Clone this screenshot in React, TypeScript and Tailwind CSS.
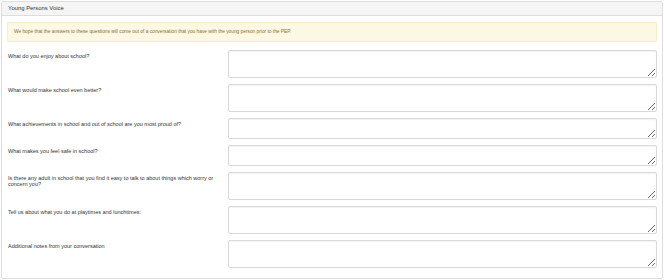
import React from 'react';

interface Question {
  label: string;
  tall: boolean;
}

const questions: Question[] = [
  { label: 'What do you enjoy about school?', tall: true },
  { label: 'What would make school even better?', tall: true },
  { label: 'What achievements in school and out of school are you most proud of?', tall: false },
  { label: 'What makes you feel safe in school?', tall: false },
  {
    label: 'Is there any adult in school that you find it easy to talk to about things which worry or concern you?',
    tall: true,
  },
  { label: 'Tell us about what you do at playtimes and lunchtimes:', tall: true },
  { label: 'Additional notes from your conversation', tall: true },
];

const App: React.FC = () => {
  return (
    <div className="w-[664px] h-[280px] bg-white p-[1px] font-['Liberation_Sans',Arial,sans-serif] text-[#333]">
      <div className="border border-[#ddd] rounded-[2px] bg-white">
        {/* Panel heading */}
        <div className="h-[14px] bg-[#f5f5f5] border-b border-[#ddd] px-[6px] flex items-center text-[5.9px] leading-none">
          Young Persons Voice
        </div>

        <div className="px-[5px] pt-[6px] pb-[10px]">
          <div className="h-[20px] bg-[#fcf8e3] border border-[#faebcc] rounded-[2px] px-[6px] flex items-center text-[4.8px] text-[#8a6d3b]">
            We hope that the answers to these questions will come out of a conversation that you have with the young
            person prior to the PEP.
          </div>

          <div className="mt-[8px] flex flex-col gap-[6px]">
            {questions.map((q) => (
              <div key={q.label} className="flex">
                <label className="w-[221px] shrink-0 pl-[1px] pr-[12px] pt-[3px] text-[5.5px] leading-[6px]">
                  {q.label}
                </label>
                <textarea
                  className={`flex-1 ${q.tall ? 'h-[28px]' : 'h-[21px]'} border border-[#d9d9d9] rounded-[2px] bg-white shadow-[inset_0_1px_1px_rgba(0,0,0,0.05)] outline-none`}
                />
              </div>
            ))}
          </div>
        </div>
      </div>
    </div>
  );
};

export default App;
